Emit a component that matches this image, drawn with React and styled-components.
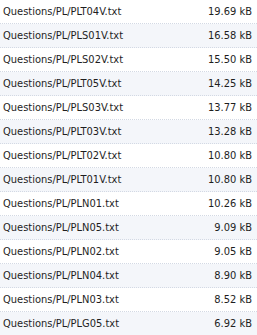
import React from 'react'
import styled, { createGlobalStyle } from 'styled-components'

const files = [
  ['Questions/PL/PLT04V.txt', '19.69 kB'],
  ['Questions/PL/PLS01V.txt', '16.58 kB'],
  ['Questions/PL/PLS02V.txt', '15.50 kB'],
  ['Questions/PL/PLT05V.txt', '14.25 kB'],
  ['Questions/PL/PLS03V.txt', '13.77 kB'],
  ['Questions/PL/PLT03V.txt', '13.28 kB'],
  ['Questions/PL/PLT02V.txt', '10.80 kB'],
  ['Questions/PL/PLT01V.txt', '10.80 kB'],
  ['Questions/PL/PLN01.txt', '10.26 kB'],
  ['Questions/PL/PLN05.txt', '9.09 kB'],
  ['Questions/PL/PLN02.txt', '9.05 kB'],
  ['Questions/PL/PLN04.txt', '8.90 kB'],
  ['Questions/PL/PLN03.txt', '8.52 kB'],
  ['Questions/PL/PLG05.txt', '6.92 kB'],
]

const GlobalStyle = createGlobalStyle`
  html, body {
    margin: 0;
    padding: 0;
    background: #fff;
  }
`

const List = styled.div`
  width: 257px;
  display: flex;
  flex-direction: column;
  font-family: "DejaVu Sans Condensed", "DejaVu Sans", sans-serif;
  font-size: 11px;
  color: #1e1e1e;
`

const Row = styled.div`
  height: 23px;
  display: flex;
  align-items: center;
  justify-content: space-between;
  padding: 0 5px 0 3px;
  background: ${p => (p.$odd ? '#f4f6fa' : '#fff')};
  border-bottom: 1px dotted #d3d9e4;
`

const Name = styled.span`
  white-space: nowrap;
`

const Size = styled.span`
  white-space: nowrap;
`

export default function App() {
  return (
    <>
      <GlobalStyle />
      <List>
        {files.map(([name, size], i) => (
          <Row key={name} $odd={i % 2 === 1}>
            <Name>{name}</Name>
            <Size>{size}</Size>
          </Row>
        ))}
      </List>
    </>
  )
}
